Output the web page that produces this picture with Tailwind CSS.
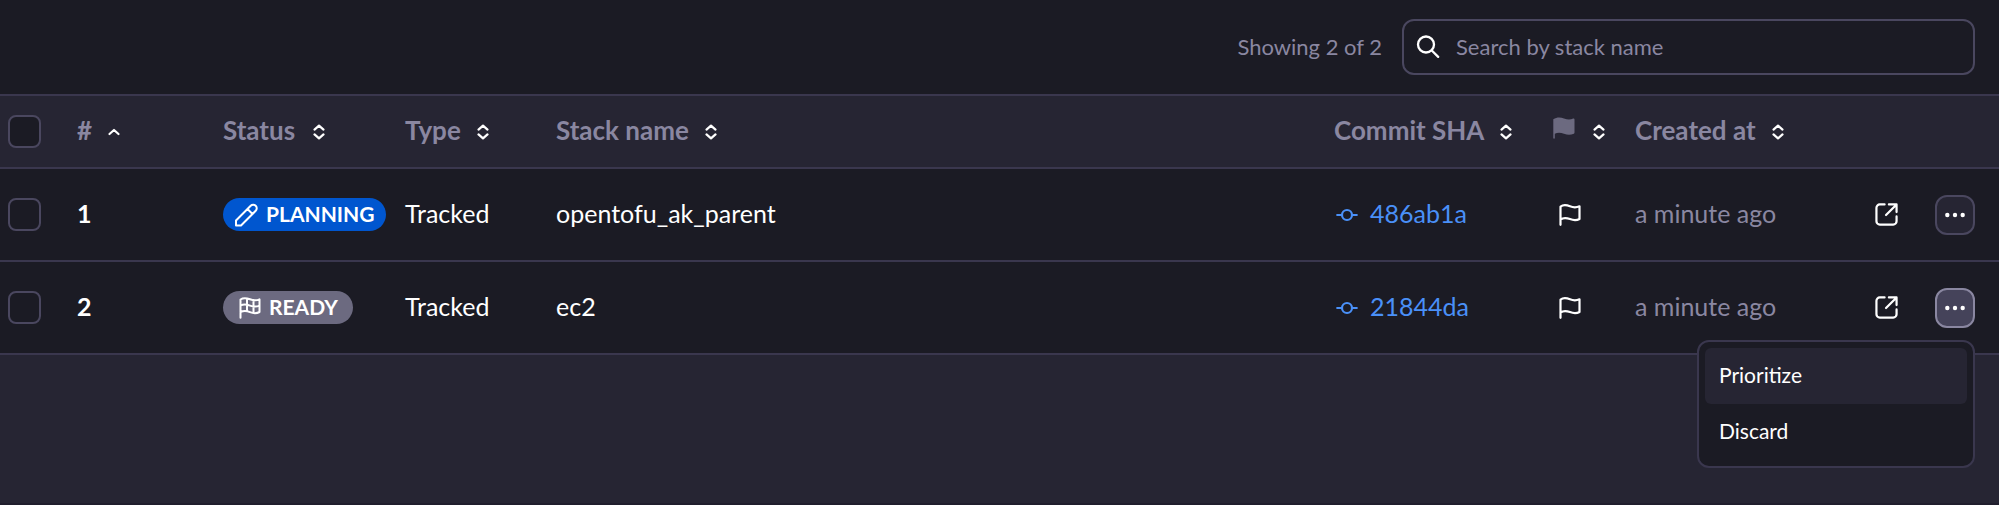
<!DOCTYPE html>
<html lang="en">
<head>
<meta charset="utf-8">
<title>Runs queue</title>
<script src="https://cdn.jsdelivr.net/npm/@tailwindcss/browser@4"></script>
</head>
<body class="min-h-screen flex flex-col bg-[#262533] border-b-2 border-[#201e2d] text-white font-['Lato','Noto_Sans',sans-serif] text-[25px] leading-8">
<svg class="hidden" aria-hidden="true">
  <symbol id="sort" viewBox="0 0 12 16" fill="none" stroke="currentColor" stroke-width="2.2" stroke-linecap="round" stroke-linejoin="round"><path d="M1.500 5.600 6 1.600l4.500 4M1.500 10.400l4.500 4 4.500-4"/></symbol>
  <symbol id="commit" viewBox="0 0 22 14" fill="none" stroke="currentColor" stroke-width="2.200" stroke-linecap="round"><circle cx="11" cy="7" r="5"/><path d="M1.200 7H6M16 7h4.800"/></symbol>
  <symbol id="flag" viewBox="0 0 22 22" fill="none" stroke="currentColor" stroke-width="2.200" stroke-linecap="round" stroke-linejoin="round"><path d="M1.500 20.800V2.600C4 .700 7.500.900 11 2.300s6.500 1.300 9.500 0V15c-3 1.700-6 1.500-9.500.100s-7-1.400-9.500.400"/></symbol>
  <symbol id="open" viewBox="0 0 24 24" fill="none" stroke="currentColor" stroke-width="2.300" stroke-linecap="round" stroke-linejoin="round"><path d="M10 1.500H5A3.500 3.500 0 0 0 1.500 5v14A3.500 3.500 0 0 0 5 22.500h14a3.500 3.500 0 0 0 3.500-3.500v-5M14.500 1.500h8v8M22 2 11.500 12.500"/></symbol>
  <symbol id="dots" viewBox="0 0 20 6" fill="currentColor"><circle cx="2.300" cy="3" r="2.200"/><circle cx="10" cy="3" r="2.200"/><circle cx="17.700" cy="3" r="2.200"/></symbol>
</svg>

<header class="flex items-center justify-end gap-5 bg-[#1b1b24] pt-[19px] pb-[19px] pr-6 text-[22px] text-[#8a87a1]">
  <p>Showing 2 of 2</p>
  <label class="flex h-14 w-[573px] items-center rounded-xl border-2 border-[#4a475f] pl-3 pr-3 focus-within:border-[#8a87a1]">
    <svg class="h-6 w-6 shrink-0 text-white" viewBox="0 0 24 24" fill="none" stroke="currentColor" stroke-width="2.300" stroke-linecap="round" aria-hidden="true"><circle cx="10" cy="9.500" r="8"/><path d="m15.800 15.500 6.400 6.400"/></svg>
    <input type="search" aria-label="Search by stack name" placeholder="Search by stack name" class="ml-4 min-w-0 flex-1 bg-transparent text-[22px] text-white outline-none placeholder:text-[#8a87a1]">
  </label>
</header>

<main>
<table class="w-full table-fixed border-separate border-spacing-0 border-t-2 border-[#3a374e] bg-[#1b1b24] text-left">
  <colgroup>
    <col class="w-[77px]"><col class="w-[146px]"><col class="w-[182px]"><col class="w-[151px]"><col><col class="w-[219px]"><col class="w-[82px]"><col class="w-[240px]"><col class="w-[60px]"><col class="w-16">
  </colgroup>
  <thead class="bg-[#262533] text-[26px] font-bold text-[#8a87a1]">
    <tr class="h-[73px] *:border-b-2 *:border-[#3a374e]">
      <th class="pl-2"><input type="checkbox" aria-label="Select all runs" class="block size-[33px] appearance-none rounded-lg border-2 border-[#4a475f] bg-[#1b1b24] checked:bg-[#0056cf]"></th>
      <th scope="col"><button class="flex items-center gap-4"><span class="pb-1">#</span><svg class="h-2 w-3 text-white" viewBox="0 0 12 8" fill="none" stroke="currentColor" stroke-width="2.200" stroke-linecap="round" stroke-linejoin="round" aria-hidden="true"><path d="M1.500 6 6 2l4.500 4"/></svg></button></th>
      <th scope="col"><button class="flex items-center gap-[18px]"><span class="pb-1">Status</span><svg class="h-4 w-3 text-white" aria-hidden="true"><use href="#sort"/></svg></button></th>
      <th scope="col"><button class="flex items-center gap-4"><span class="pb-1">Type</span><svg class="h-4 w-3 text-white" aria-hidden="true"><use href="#sort"/></svg></button></th>
      <th scope="col"><button class="flex items-center gap-4"><span class="pb-1">Stack name</span><svg class="h-4 w-3 text-white" aria-hidden="true"><use href="#sort"/></svg></button></th>
      <th scope="col"><button class="flex items-center gap-4"><span class="pb-1">Commit SHA</span><svg class="h-4 w-3 text-white" aria-hidden="true"><use href="#sort"/></svg></button></th>
      <th scope="col"><button class="flex items-center gap-[18px]" aria-label="Priority"><svg class="mb-2 size-[22px] text-[#6c6a80]" viewBox="0 0 22 22" fill="currentColor" aria-hidden="true"><path d="M.300 21V2.200C4 0 7.500.200 11 1.500s6.500 1.200 9.200.100c.700-.300 1.300 0 1.300.800v13.200c0 .500-.200.900-.700 1.100-3.300 1.600-6.300 1.400-9.800.100s-6.500-1.400-9.200 0v4.200c0 .900-1.500.900-1.500 0z"/></svg><svg class="h-4 w-3 text-white" aria-hidden="true"><use href="#sort"/></svg></button></th>
      <th scope="col"><button class="flex items-center gap-4"><span class="pb-1">Created at</span><svg class="h-4 w-3 text-white" aria-hidden="true"><use href="#sort"/></svg></button></th>
      <th></th>
      <th></th>
    </tr>
  </thead>
  <tbody>
    <tr class="h-[93px] *:border-b-2 *:border-[#3a374e]">
      <td class="pl-2"><input type="checkbox" aria-label="Select run 1" class="block size-[33px] appearance-none rounded-lg border-2 border-[#4a475f] checked:bg-[#0056cf]"></td>
      <td class="pb-1 font-bold">1</td>
      <td><span class="flex h-[33px] w-fit items-center gap-2 rounded-full bg-[#0056cf] pl-[11px] pr-[11px] text-[21px] font-bold"><svg class="size-6" viewBox="0 0 24 24" fill="none" stroke="currentColor" stroke-width="2" stroke-linejoin="round" stroke-linecap="round" aria-hidden="true"><path d="M2 22.500v-5L16.700 2.800a3.500 3.500 0 0 1 5 5L7 22.500zM13.500 6l5 5"/></svg><span class="pb-0.5">PLANNING</span></span></td>
      <td class="pb-1">Tracked</td>
      <td class="pb-1">opentofu_ak_parent</td>
      <td><a href="#486ab1a" class="flex items-center gap-3 text-[#4a90f8]"><svg class="ml-0.5 h-3.5 w-[22px]" aria-hidden="true"><use href="#commit"/></svg><span class="pb-1">486ab1a</span></a></td>
      <td><button class="ml-1.5 block" aria-label="Prioritize run 1"><svg class="size-[22px]" aria-hidden="true"><use href="#flag"/></svg></button></td>
      <td class="pb-1 text-[#8a87a1]">a minute ago</td>
      <td><a href="#run-1" class="block w-6" aria-label="Open run 1"><svg class="size-[23px]" aria-hidden="true"><use href="#open"/></svg></a></td>
      <td><button class="flex size-10 items-center justify-center rounded-xl border-2 border-[#4a475f] bg-[#262533]" aria-label="Actions for run 1"><svg class="h-1.5 w-5" aria-hidden="true"><use href="#dots"/></svg></button></td>
    </tr>
    <tr class="h-[93px] *:border-b-2 *:border-[#3a374e]">
      <td class="pl-2"><input type="checkbox" aria-label="Select run 2" class="block size-[33px] appearance-none rounded-lg border-2 border-[#4a475f] checked:bg-[#0056cf]"></td>
      <td class="pb-1 font-bold">2</td>
      <td><span class="flex h-[33px] w-fit items-center gap-2 rounded-full bg-[#6c6a80] pl-4 pr-[15px] text-[21px] font-bold"><svg class="size-[22px]" viewBox="0 0 22 22" fill="none" stroke="currentColor" stroke-width="2" stroke-linecap="round" stroke-linejoin="round" aria-hidden="true"><path d="M1.500 20.800V2.500C4 .900 7 .900 11 2.300s6.500 1.300 9.500 0V15c-3 1.600-6 1.500-9.500.100s-7-1.400-9.500.100M8 1.500v12.800M14.500 3v13M1.500 8.700C4 7.200 7 7.200 11 8.600s6.500 1.400 9.500 0"/></svg><span class="pb-0.5">READY</span></span></td>
      <td class="pb-1">Tracked</td>
      <td class="pb-1">ec2</td>
      <td><a href="#21844da" class="flex items-center gap-3 text-[#4a90f8]"><svg class="ml-0.5 h-3.5 w-[22px]" aria-hidden="true"><use href="#commit"/></svg><span class="pb-1">21844da</span></a></td>
      <td><button class="ml-1.5 block" aria-label="Prioritize run 2"><svg class="size-[22px]" aria-hidden="true"><use href="#flag"/></svg></button></td>
      <td class="pb-1 text-[#8a87a1]">a minute ago</td>
      <td><a href="#run-2" class="block w-6" aria-label="Open run 2"><svg class="size-[23px]" aria-hidden="true"><use href="#open"/></svg></a></td>
      <td>
        <div class="relative w-10">
          <button class="flex size-10 items-center justify-center rounded-xl border-2 border-[#8a87a1] bg-[#45435a]" aria-label="Actions for run 2" aria-haspopup="menu" aria-expanded="true"><svg class="h-1.5 w-5" aria-hidden="true"><use href="#dots"/></svg></button>
          <div role="menu" class="absolute top-full right-0 mt-3 flex w-[278px] flex-col rounded-xl border-2 border-[#3a374e] bg-[#1b1b24] p-1.5 text-[21px]">
            <button role="menuitem" class="h-14 rounded-md bg-[#262533] px-3.5 pb-0.5 text-left">Prioritize</button>
            <button role="menuitem" class="h-14 rounded-md px-3.5 pb-0.5 text-left hover:bg-[#262533]">Discard</button>
          </div>
        </div>
      </td>
    </tr>
  </tbody>
</table>
</main>
</body>
</html>
